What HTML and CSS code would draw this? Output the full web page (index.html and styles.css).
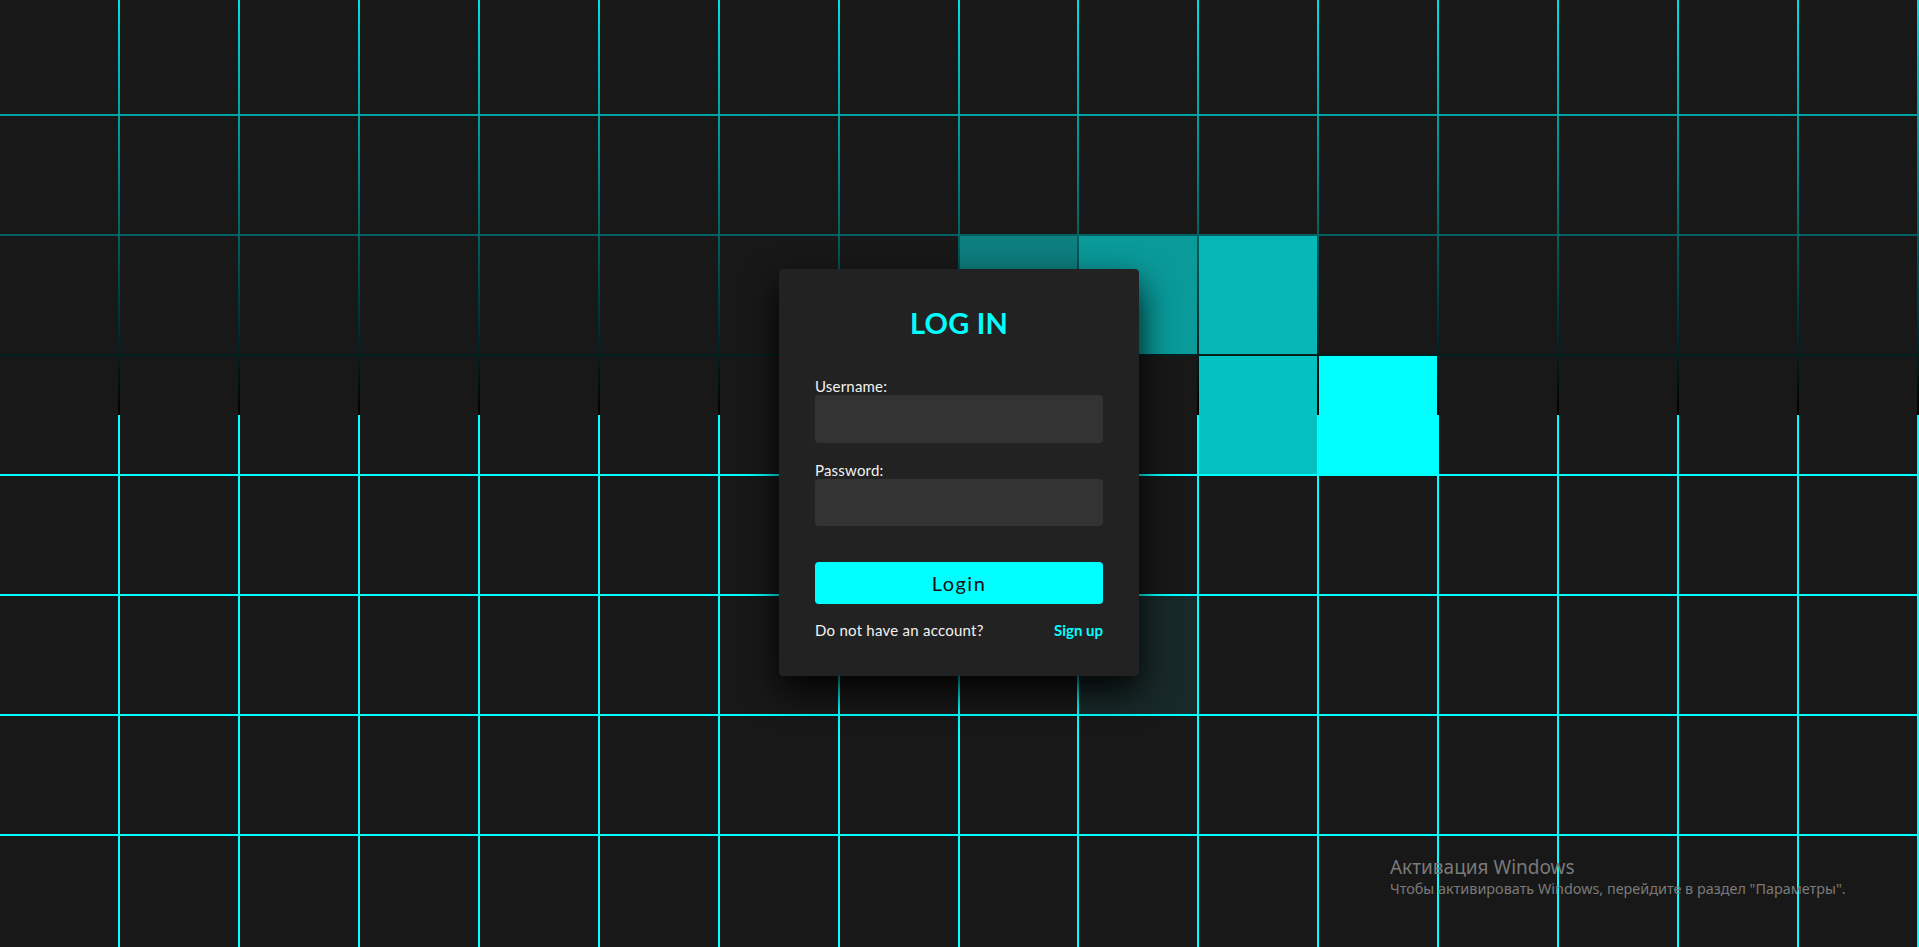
FILE: index.html
```html
<!DOCTYPE html>
<html lang="en">
<head>
<meta charset="utf-8">
<title>Log in</title>
<link rel="stylesheet" href="styles.css">
</head>
<body>
<section class="stage">
  <div class="tiles">
    <span></span><span></span><span></span><span></span><span></span><span></span><span></span><span></span><span></span><span></span><span></span><span></span><span></span><span></span><span></span><span></span>
    <span></span><span></span><span></span><span></span><span></span><span></span><span></span><span></span><span></span><span></span><span></span><span></span><span></span><span></span><span></span><span></span>
    <span></span><span></span><span></span><span></span><span></span><span></span><span></span><span></span><span class="lit-1"></span><span class="lit-2"></span><span class="lit-3"></span><span></span><span></span><span></span><span></span><span></span>
    <span></span><span></span><span></span><span></span><span></span><span></span><span></span><span></span><span></span><span></span><span class="lit-4"></span><span class="lit-5"></span><span></span><span></span><span></span><span></span>
    <span></span><span></span><span></span><span></span><span></span><span></span><span></span><span></span><span></span><span></span><span></span><span></span><span></span><span></span><span></span><span></span>
    <span></span><span></span><span></span><span></span><span></span><span></span><span></span><span></span><span></span><span class="lit-0"></span><span></span><span></span><span></span><span></span><span></span><span></span>
    <span></span><span></span><span></span><span></span><span></span><span></span><span></span><span></span><span></span><span></span><span></span><span></span><span></span><span></span><span></span><span></span>
    <span></span><span></span><span></span><span></span><span></span><span></span><span></span><span></span><span></span><span></span><span></span><span></span><span></span><span></span><span></span><span></span>
  </div>

  <div class="card">
    <h2 class="card-title">LOG IN</h2>
    <form class="form">
      <label class="field">
        <span class="field-label">Username:</span>
        <input class="field-input" type="text">
      </label>
      <label class="field field-second">
        <span class="field-label">Password:</span>
        <input class="field-input field-input-short" type="password">
      </label>
      <button class="btn" type="button">Login</button>
      <div class="links">
        <span class="links-text">Do not have an account?</span>
        <a class="links-signup" href="#">Sign up</a>
      </div>
    </form>
  </div>

  <div class="watermark">
    <div class="watermark-title">Активация Windows</div>
    <div class="watermark-text">Чтобы активировать Windows, перейдите в раздел "Параметры".</div>
  </div>
</section>
</body>
</html>
```

FILE: styles.css
```css
* {
  margin: 0;
  padding: 0;
  box-sizing: border-box;
}

html, body {
  width: 100%;
  height: 100%;
}

body {
  background: #000;
  font-family: "Lato", "Noto Sans", sans-serif;
  overflow: hidden;
}

.stage {
  position: relative;
  width: 100vw;
  height: 100vh;
  overflow: hidden;
  background: #00ffff;
}

.stage::before {
  content: "";
  position: absolute;
  left: 0;
  top: -532px;
  width: 100%;
  height: 947px;
  background: linear-gradient(#000, #00ffff, #000);
}

.tiles {
  position: relative;
  z-index: 1;
  display: grid;
  grid-template-columns: repeat(16, calc(6.25vw - 2px));
  grid-auto-rows: calc(6.25vw - 2px);
  gap: 2px;
  justify-content: start;
  margin-top: -4px;
}

.tiles span {
  display: block;
  background: #181818;
}

.tiles .lit-0 { background: #182929; }
.tiles .lit-1 { background: #0d7f7f; }
.tiles .lit-2 { background: #0a9a9a; }
.tiles .lit-3 { background: #07b6b6; }
.tiles .lit-4 { background: #05c2c2; }
.tiles .lit-5 { background: #00ffff; }

.card {
  position: absolute;
  z-index: 5;
  left: 779px;
  top: 269px;
  width: 360px;
  padding: 39px 36px 38px;
  background: #222;
  border-radius: 4px;
  box-shadow: 0 15px 35px rgba(0, 0, 0, 0.9);
}

.card-title {
  font-size: 29px;
  line-height: 30px;
  font-weight: 700;
  color: #00ffff;
  text-align: center;
  letter-spacing: 0.2px;
}

.form {
  display: flex;
  flex-direction: column;
  margin-top: 41px;
}

.field {
  display: flex;
  flex-direction: column;
  gap: 1px;
}

.field-second {
  margin-top: 20px;
}

.field-label {
  font-size: 15px;
  line-height: 15px;
  color: #f2f2f2;
  letter-spacing: 0.2px;
}

.field-input {
  height: 48px;
  width: 100%;
  background: #333;
  border: none;
  outline: none;
  border-radius: 4px;
  color: #fff;
  font-family: inherit;
  font-size: 16px;
  padding: 0 10px;
}

.field-input-short {
  height: 47px;
}

.btn {
  margin-top: 36px;
  height: 42px;
  width: 100%;
  border: none;
  border-radius: 4px;
  background: #00ffff;
  color: #111;
  font-family: inherit;
  font-size: 20px;
  font-weight: 400;
  letter-spacing: 1.5px;
  cursor: pointer;
}

.links {
  margin-top: 19px;
  display: flex;
  justify-content: space-between;
  align-items: baseline;
  font-size: 15px;
  line-height: 15px;
}

.links-text {
  color: #f2f2f2;
  letter-spacing: 0.25px;
}

.links-signup {
  color: #00ffff;
  font-weight: 700;
  text-decoration: none;
}

.watermark {
  position: absolute;
  z-index: 10;
  left: 1390px;
  top: 855px;
  font-family: "Noto Sans", "Open Sans", sans-serif;
  color: #7a7a7a;
}

.watermark-title {
  font-size: 19px;
  line-height: 24px;
}

.watermark-text {
  font-size: 14.4px;
  line-height: 20px;
}
```
